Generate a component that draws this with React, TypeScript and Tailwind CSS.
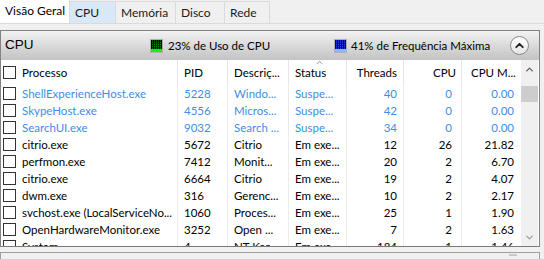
import { ChevronUp, ChevronDown } from "lucide-react";

type Row = {
  name: string;
  pid: string;
  desc: string;
  status: string;
  threads: string;
  cpu: string;
  cpuMax: string;
  suspended?: boolean;
};

const rows: Row[] = [
  { name: "ShellExperienceHost.exe", pid: "5228", desc: "Windo...", status: "Suspe...", threads: "40", cpu: "0", cpuMax: "0.00", suspended: true },
  { name: "SkypeHost.exe", pid: "4556", desc: "Micros...", status: "Suspe...", threads: "42", cpu: "0", cpuMax: "0.00", suspended: true },
  { name: "SearchUI.exe", pid: "9032", desc: "Search ...", status: "Suspe...", threads: "34", cpu: "0", cpuMax: "0.00", suspended: true },
  { name: "citrio.exe", pid: "5672", desc: "Citrio", status: "Em exe...", threads: "12", cpu: "26", cpuMax: "21.82" },
  { name: "perfmon.exe", pid: "7412", desc: "Monit...", status: "Em exe...", threads: "20", cpu: "2", cpuMax: "6.70" },
  { name: "citrio.exe", pid: "6664", desc: "Citrio", status: "Em exe...", threads: "19", cpu: "2", cpuMax: "4.07" },
  { name: "dwm.exe", pid: "316", desc: "Gerenc...", status: "Em exe...", threads: "10", cpu: "2", cpuMax: "2.17" },
  { name: "svchost.exe (LocalServiceNo...", pid: "1060", desc: "Proces...", status: "Em exe...", threads: "25", cpu: "1", cpuMax: "1.90" },
  { name: "OpenHardwareMonitor.exe", pid: "3252", desc: "Open ...", status: "Em exe...", threads: "7", cpu: "2", cpuMax: "1.63" },
  { name: "System", pid: "4", desc: "NT Ker...", status: "Em exe...", threads: "184", cpu: "1", cpuMax: "1.46" },
];

const tabs = ["Visão Geral", "CPU", "Memória", "Disco", "Rede"];
const tabWidths = ["w-[70px]", "w-[46px]", "w-[60px]", "w-[49px]", "w-[45px]"];

const cols = "grid grid-cols-[177px_50px_61px_58px_57px_58px_59px]";

function Meter({ top, grid, bottom }: { top: string; grid: string; bottom: string }) {
  const dots = [];
  for (let y = 0; y < 5; y++)
    for (let x = 0; x < 5; x++)
      dots.push(<rect key={`${x}-${y}`} x={2 + x * 2} y={1.5 + y * 1.8} width="1" height="1" fill={grid} />);
  return (
    <svg width="13" height="14" viewBox="0 0 13 14" className="shrink-0">
      <rect x="0.5" y="0.5" width="12" height="13" fill="#fff" stroke="#b0b0b0" />
      <rect x="1" y="1" width="11" height="9" fill={top} />
      {dots}
      <rect x="1" y="10" width="11" height="3" fill={bottom} />
    </svg>
  );
}

function Checkbox() {
  return <span className="w-[13px] h-[13px] border border-[#333] bg-white shrink-0" />;
}

export default function App() {
  return (
    <div className="w-[544px] h-[259px] overflow-hidden bg-[#f0f0f0] font-['Lato',sans-serif] text-[11.5px] text-black">
      {/* tabs */}
      <div className="flex items-end h-[24px] border-b border-[#dadada]">
        {tabs.map((t, i) => (
          <div
            key={t}
            className={`${tabWidths[i]} flex items-center pl-[5px] border-r border-[#dadada] text-[12px] whitespace-nowrap ${
              i === 0
                ? "h-[24px] bg-white text-black"
                : i === 1
                  ? "h-[22px] bg-[#d9e8f7] border-t border-[#c6dcf1] text-[#1a1a1a]"
                  : "h-[22px] bg-[#f0f0f0] border-t border-[#dadada] text-[#1a1a1a]"
            }`}
          >
            {t}
          </div>
        ))}
      </div>

      <div className="mt-[6px] w-[540px] border border-[#828282] border-b-0">
        {/* section header */}
        <div className="h-[29px] flex items-center bg-gradient-to-b from-[#f2f2f2] to-[#c3c3c3] pl-[4px] pr-[10px] whitespace-nowrap">
          <span className="text-[13.5px] font-['Liberation_Sans',sans-serif] w-[145px]">CPU</span>
          <Meter top="#000" grid="#00a000" bottom="#00ff00" />
          <span className="ml-[5px] text-[11.5px] w-[166px]">23% de Uso de CPU</span>
          <Meter top="#000080" grid="#3050ff" bottom="#7fbfff" />
          <span className="ml-[4px] text-[11.5px]">41% de Frequência Máxima</span>
          <span className="ml-auto w-[19px] h-[19px] rounded-full border border-[#8a8a8a] bg-gradient-to-b from-white to-[#e4e4e4] flex items-center justify-center">
            <ChevronUp size={13} strokeWidth={3.5} color="#222" />
          </span>
        </div>

        {/* table */}
        <div className="relative bg-white flex h-[187px] border-b border-[#7a7a7a]">
          <div className="w-[520px] overflow-hidden">
            <div className={`${cols} h-[25px] items-center relative`}>
              <div className="flex items-center gap-[6px] pl-[2px] h-full border-r border-[#e5e5e5]">
                <Checkbox />
                <span>Processo</span>
              </div>
              <div className="pl-[6px] h-full flex items-center border-r border-[#e5e5e5]">PID</div>
              <div className="pl-[6px] h-full flex items-center border-r border-[#e5e5e5]">Descriç...</div>
              <div className="pl-[6px] h-full flex items-center border-r border-[#e5e5e5] relative">
                Status
                <ChevronUp size={9} strokeWidth={2} color="#777" className="absolute left-[26px] top-[-2px]" />
              </div>
              <div className="pr-[6px] h-full flex items-center justify-end border-r border-[#e5e5e5]">Threads</div>
              <div className="pr-[5px] h-full flex items-center justify-end border-r border-[#e5e5e5]">CPU</div>
              <div className="pl-[9px] h-full flex items-center whitespace-nowrap">CPU M...</div>
            </div>
            {rows.map((r, i) => (
              <div
                key={i}
                className={`${cols} h-[17px] items-center ${r.suspended ? "text-[#3d8ee6]" : "text-black"}`}
              >
                <div className="flex items-center gap-[6px] pl-[2px] h-full border-r border-[#ececec] whitespace-nowrap overflow-hidden">
                  <Checkbox />
                  <span>{r.name}</span>
                </div>
                <div className="pl-[6px] h-full flex items-center border-r border-[#ececec]">{r.pid}</div>
                <div className="pl-[6px] h-full flex items-center border-r border-[#ececec] whitespace-nowrap">{r.desc}</div>
                <div className="pl-[6px] h-full flex items-center border-r border-[#ececec] whitespace-nowrap">{r.status}</div>
                <div className="pr-[6px] h-full flex items-center justify-end border-r border-[#ececec]">{r.threads}</div>
                <div className="pr-[9px] h-full flex items-center justify-end border-r border-[#ececec]">{r.cpu}</div>
                <div className="pr-[7px] h-full flex items-center justify-end">{r.cpuMax}</div>
              </div>
            ))}
          </div>

          {/* scrollbar */}
          <div className="w-[17px] bg-[#f0f0f0] flex flex-col items-center">
            <ChevronUp size={11} strokeWidth={3} color="#606060" className="mt-[4px]" />
            <div className="mt-[11px] w-[17px] h-[16px] bg-[#cdcdcd]" />
            <div className="flex-1" />
            <ChevronDown size={11} strokeWidth={3} color="#a0a0a0" className="mb-[3px]" />
          </div>
        </div>
      </div>

      <div className="mt-[5px] w-[540px] h-[10px] border border-[#a0a0a0] border-b-0 bg-[#f0f0f0] flex justify-end">
        <div className="mr-[22px] mt-[1px] w-[8px] h-[2px] bg-[#c8c8c8]" />
      </div>
    </div>
  );
}
